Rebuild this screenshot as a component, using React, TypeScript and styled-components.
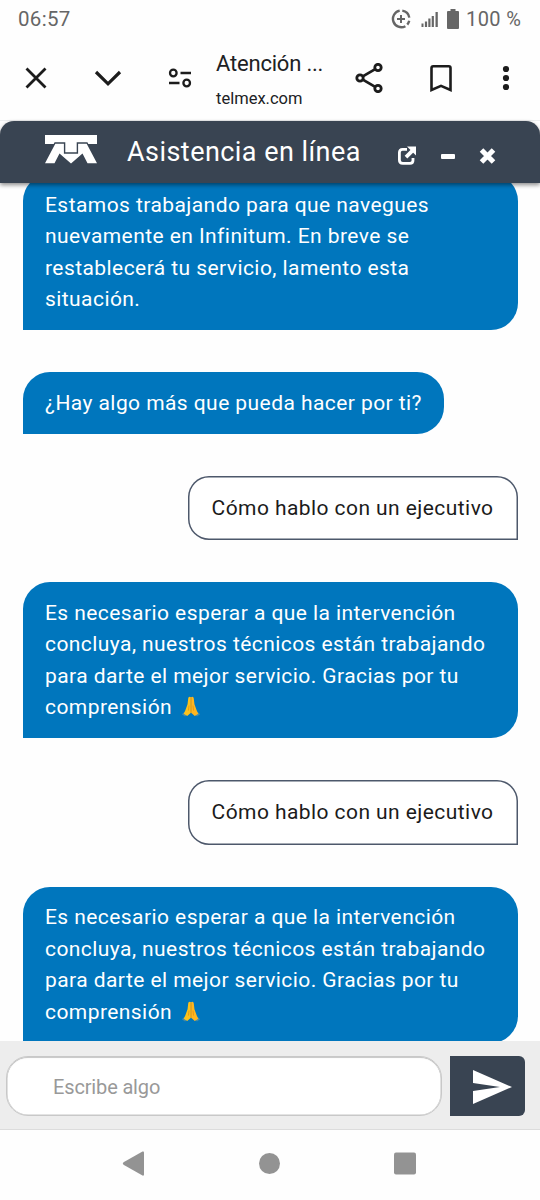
import React from "react";
import styled, { createGlobalStyle } from "styled-components";

const GlobalStyle = createGlobalStyle`
  * { box-sizing: border-box; }
  body { margin: 0; background: #fff; font-family: Roboto, "Liberation Sans", sans-serif; }
  svg { display: block; flex: none; }
`;

const Screen = styled.div`
  width: 540px;
  height: 1200px;
  display: flex;
  flex-direction: column;
  overflow: hidden;
  background: #fefefe;
`;

const StatusBar = styled.div`
  height: 38px;
  flex: none;
  display: flex;
  align-items: center;
  padding: 0 18px 0 18px;
  color: #666;
  font-size: 20px;
  line-height: 38px;
`;

const Clock = styled.span`
  flex: 1;
  font-size: 20.5px;
  letter-spacing: 0.3px;
`;

const StatusIcons = styled.div`
  display: flex;
  align-items: center;
  svg:nth-child(2) { margin-left: 10px; }
  svg:nth-child(3) { margin: 0 7px 0 8px; }
`;

const Battery = styled.span`
  width: 56px;
  white-space: nowrap;
  letter-spacing: 0.4px;
`;

const BrowserBar = styled.div`
  height: 83px;
  flex: none;
  display: flex;
  align-items: flex-start;
  padding: 19px 0 0 16px;
  border-bottom: 1px solid #eceeef;
`;

const BarButton = styled.button<{ $gap?: number }>`
  width: 40px;
  height: 42px;
  padding: 0;
  border: 0;
  background: none;
  flex: none;
  display: flex;
  align-items: center;
  justify-content: center;
  margin-right: ${(p) => p.$gap ?? 0}px;
`;

const PageInfo = styled.div`
  width: 133px;
  flex: none;
  margin-top: -9px;
  color: #202124;
  white-space: nowrap;
`;

const PageTitle = styled.div`
  font-size: 22px;
  line-height: 32px;
  letter-spacing: -0.2px;
`;

const PageHost = styled.div`
  margin-top: 5px;
  font-size: 16.5px;
  line-height: 28px;
`;

const ChatHeader = styled.header`
  height: 62px;
  flex: none;
  display: flex;
  align-items: center;
  padding: 0 44px 0 45px;
  background: #394452;
  border-radius: 14px 14px 0 0;
  box-shadow: 0 2px 4px rgba(0, 0, 0, 0.45);
  position: relative;
`;

const Logo = styled.svg`
  margin-bottom: 5px;
`;

const ChatTitle = styled.h1`
  flex: 1;
  margin: -1px 0 0 30px;
  font-size: 27px;
  font-weight: 400;
  letter-spacing: 0.45px;
  line-height: 40px;
  color: #fff;
  white-space: nowrap;
`;

const HeaderActions = styled.div`
  display: flex;
  align-items: center;
  gap: 23px;
  padding-top: 8px;
`;

const Messages = styled.main`
  height: 858px;
  flex: none;
  display: flex;
  flex-direction: column;
  justify-content: flex-end;
  gap: 42px;
  padding: 0 22.5px;
  overflow: hidden;
`;

const Bubble = styled.div<{ $mine?: boolean }>`
  flex: none;
  align-self: ${(p) => (p.$mine ? "flex-end" : "flex-start")};
  max-width: 495px;
  padding: ${(p) => (p.$mine ? "17.3px 24px 15.7px" : "15.8px 22.5px 14.2px")};
  font-size: 21px;
  line-height: 31.5px;
  letter-spacing: 0.43px;
  white-space: pre;
  color: ${(p) => (p.$mine ? "#1b1b1b" : "#fff")};
  background: ${(p) => (p.$mine ? "#fff" : "#0076bd")};
  box-shadow: ${(p) => (p.$mine ? "inset 0 0 0 1.5px #4d586b" : "none")};
  border-radius: ${(p) => (p.$mine ? "21px 21px 0 21px" : "27px 27px 27px 0")};
`;

const WideBubble = styled(Bubble)`
  width: 495px;
`;

const Hands = styled.svg`
  && { display: inline-block; }
  vertical-align: -4px;
  margin-left: 3px;
`;

const Composer = styled.form`
  height: 89px;
  flex: none;
  display: flex;
  gap: 8px;
  padding: 15px 15px 14px 6px;
  background: #ededed;
  border-bottom: 1.5px solid #dcdcdc;
`;

const MessageInput = styled.input`
  width: 436px;
  height: 60px;
  padding: 1px 45px 0 46px;
  border: 1.5px solid #c8c8c8;
  border-radius: 22px;
  background: #fff;
  box-shadow: inset 0 1px 1px rgba(0, 0, 0, 0.12), inset 0 0 0 0.5px #c8c8c8;
  font: 400 20px Roboto, "Liberation Sans", sans-serif;
  letter-spacing: -0.15px;
  &::placeholder { color: #999; opacity: 1; }
`;

const SendButton = styled.button`
  width: 75px;
  height: 60px;
  padding: 2px 0 0 9px;
  border: 0;
  border-radius: 0 6px 6px 0;
  background: #394452;
  display: flex;
  align-items: center;
  justify-content: center;
`;

const SystemNav = styled.nav`
  flex: 1;
  display: flex;
  align-items: flex-start;
  justify-content: space-between;
  padding: 21px 123px 0 122px;
`;

const PrayingHands = () => (
  <Hands width="20" height="24" viewBox="0 0 22 24" role="img" aria-label="manos juntas">
    <path d="M5.5 17 1 21l3.5 2.5L8 20z" fill="#458baa" />
    <path d="M16.5 17 21 21l-3.500 2.500L14 20z" fill="#458baa" />
    <path d="M10.900 2.500C9.500 1.200 8 2 7.900 4L7.200 10 4.500 17.500 3 20.500 6.800 23 10.900 19.500z" fill="#fcc21b" />
    <path d="M11.100 2.500C12.500 1.200 14 2 14.100 4L14.800 10 17.500 17.500 19 20.500 15.200 23 11.100 19.500z" fill="#ffb61f" />
    <path d="M11 3v16.500M8.800 11.500 8.200 17M13.200 11.500 13.800 17" stroke="#df8d12" strokeWidth="0.8" fill="none" />
  </Hands>
);

const WAIT_TEXT =
  "Es necesario esperar a que la intervención\nconcluya, nuestros técnicos están trabajando\npara darte el mejor servicio. Gracias por tu\ncomprensión ";

export default function App() {
  return (
    <Screen>
      <GlobalStyle />
      <StatusBar>
        <Clock>06:57</Clock>
        <StatusIcons>
          <svg width="20" height="20" viewBox="0 0 20 20" fill="none" stroke="#666" strokeWidth="2.4">
            <path d="M11.300 1.600A8.400 8.400 0 0 1 18.300 8.600M18.200 11.800A8.400 8.400 0 0 1 16.300 15.600M14.400 17.200A8.400 8.400 0 1 1 8.700 1.600" />
            <path d="M10 6v8M6 10h8" strokeWidth="2" />
          </svg>
          <svg width="18" height="17" viewBox="0 0 18 17" fill="#666">
            <path d="M.5 12.500h2V16h-2zM3.900 10.500h2.200V16h-2.200zM7.300 7.500h2.200V16h-2.200zM10.700 5h2.200v11h-2.200zM14.500 1h2.300v15h-2.300z" />
          </svg>
          <svg width="12" height="20" viewBox="0 0 12 20" fill="#666">
            <path d="M3.500 0h5v2H11q1 0 1 1v16q0 1-1 1H1q-1 0-1-1V3q0-1 1-1h2.500z" />
          </svg>
          <Battery>100 %</Battery>
        </StatusIcons>
      </StatusBar>

      <BrowserBar>
        <BarButton $gap={32} aria-label="Cerrar">
          <svg width="22" height="22" viewBox="0 0 22 22" fill="none" stroke="#1c1c1c" strokeWidth="2.800">
            <path d="m1.500 1.500 19 19m0-19-19 19" />
          </svg>
        </BarButton>
        <BarButton $gap={32} aria-label="Minimizar">
          <svg width="28" height="18" viewBox="0 0 28 18" fill="none" stroke="#1c1c1c" strokeWidth="3.2">
            <path d="m2 3 12 11.800L26 3" />
          </svg>
        </BarButton>
        <BarButton $gap={16} aria-label="Información del sitio">
          <svg width="24" height="20" viewBox="0 0 24 20" fill="none" stroke="#1c1c1c" strokeWidth="2.300">
            <circle cx="5.300" cy="5" r="3.300" />
            <circle cx="18.700" cy="15" r="3.300" />
            <path d="M12.500 5H23M1 15h10.500" />
          </svg>
        </BarButton>
        <PageInfo>
          <PageTitle>Atención ...</PageTitle>
          <PageHost>telmex.com</PageHost>
        </PageInfo>
        <BarButton $gap={32} aria-label="Compartir">
          <svg width="28" height="30" viewBox="0 0 28 30" fill="none" stroke="#1c1c1c" strokeWidth="2.800">
            <circle cx="5" cy="15" r="3.200" />
            <circle cx="23" cy="4.500" r="3.200" />
            <circle cx="23" cy="25.500" r="3.200" />
            <path d="M7.800 13.400 20.200 6.100M7.800 16.600l12.400 7.300" />
          </svg>
        </BarButton>
        <BarButton $gap={24.5} aria-label="Guardar">
          <svg width="22" height="27" viewBox="0 0 22 27" fill="none" stroke="#1c1c1c" strokeWidth="2.600">
            <path d="M1.500 25V3Q1.500 1.300 3.200 1.300H18.800Q20.500 1.300 20.500 3V25L11 20.800z" />
          </svg>
        </BarButton>
        <BarButton aria-label="Más opciones">
          <svg width="8" height="26" viewBox="0 0 8 26" fill="#1c1c1c">
            <circle cx="4" cy="4" r="3.100" />
            <circle cx="4" cy="13" r="3.100" />
            <circle cx="4" cy="22" r="3.100" />
          </svg>
        </BarButton>
      </BrowserBar>

      <ChatHeader>
        <Logo width="52" height="29" viewBox="0 0 52 29" fill="#fff">
          <path d="M0 0h52v9H43.300L42.400 7.300H31.700V17.300H20.300V7.300H9.600L8.700 9H0z" />
          <path d="M10.300 8.700h8.600V18.700h14.200V8.700h8.600L52 28.200H42.500L37.500 18.500 26 28.500 14.500 18.500l-5 9.700H0z" />
        </Logo>
        <ChatTitle>Asistencia en línea</ChatTitle>
        <HeaderActions>
          <svg width="20" height="20" viewBox="0 0 20 20" fill="none" stroke="#fff" strokeWidth="2.800">
            <path d="M10 3.400H5.500Q2.400 3.400 2.400 6.500V14Q2.400 17.400 5.800 17.400H13Q16 17.400 16 14.200V12" />
            <path d="M9 11.200 15.500 4.700" strokeWidth="3.800" />
            <path d="M10 .5h9v9z" fill="#fff" stroke="none" />
          </svg>
          <svg width="16" height="6" viewBox="0 0 16 6">
            <rect x="1" y="1" width="14" height="5" rx="1" fill="#fff" />
          </svg>
          <svg width="17" height="16" viewBox="0 0 17 16" fill="none" stroke="#fff" strokeWidth="5">
            <path d="m2.500 2 12 12m0-12-12 12" />
          </svg>
        </HeaderActions>
      </ChatHeader>

      <Messages>
        <WideBubble>
          {"Estamos trabajando para que navegues\nnuevamente en Infinitum. En breve se\nrestablecerá tu servicio, lamento esta\nsituación."}
        </WideBubble>
        <Bubble>¿Hay algo más que pueda hacer por ti?</Bubble>
        <Bubble $mine>Cómo hablo con un ejecutivo</Bubble>
        <WideBubble>
          {WAIT_TEXT}
          <PrayingHands />
        </WideBubble>
        <Bubble $mine>Cómo hablo con un ejecutivo</Bubble>
        <WideBubble style={{ marginBottom: -1.5 }}>
          {WAIT_TEXT}
          <PrayingHands />
        </WideBubble>
      </Messages>

      <Composer>
        <MessageInput placeholder="Escribe algo" />
        <SendButton type="button" aria-label="Enviar">
          <svg width="39" height="34" viewBox="0 0 39 34" fill="#fff">
            <path d="M0 0 39 17 0 34V21l27-4L0 13z" />
          </svg>
        </SendButton>
      </Composer>

      <SystemNav>
        <svg width="23" height="25" viewBox="0 0 23 25" fill="#939393">
          <path d="M1.500 11.300 20.500.5Q22 0 22 1.500v22Q22 25 20.500 24.500L1.500 13.700Q0 12.500 1.500 11.300z" />
        </svg>
        <svg width="22" height="25" viewBox="0 0 22 25" fill="#939393">
          <circle cx="11.500" cy="12.500" r="10.500" />
        </svg>
        <svg width="24" height="25" viewBox="0 0 24 25" fill="#939393">
          <rect x="1" y="1.500" width="22" height="22" rx="2" />
        </svg>
      </SystemNav>
    </Screen>
  );
}
